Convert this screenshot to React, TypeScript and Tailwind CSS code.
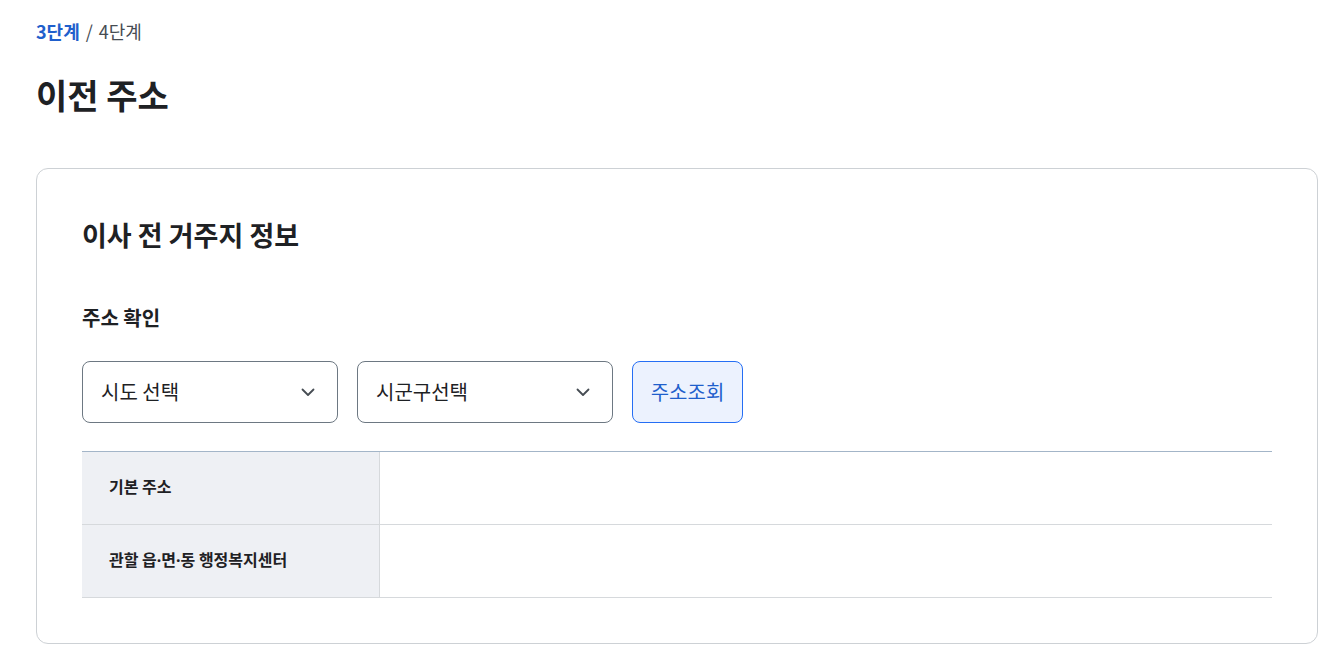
import React from "react";

const font = { fontFamily: '"Noto Sans CJK KR", "Noto Sans", sans-serif' };

function Chevron() {
  return (
    <svg width="18" height="18" viewBox="0 0 18 18" fill="none" stroke="#464c53" strokeWidth="1.8" strokeLinecap="round" strokeLinejoin="round">
      <path d="M3.5 6.5 L9 12 L14.5 6.5" />
    </svg>
  );
}

function Select({ label }: { label: string }) {
  return (
    <div className="flex h-[62px] w-[256px] items-center justify-between rounded-[8px] border border-[#6d7882] bg-white pl-[18px] pr-[20px]">
      <span className="text-[20px] text-[#1e2124]">{label}</span>
      <Chevron />
    </div>
  );
}

const dot = <span style={{ fontFamily: '"Noto Sans", sans-serif' }}>·</span>;

export default function App() {
  return (
    <div className="min-h-[658px] bg-white pl-[36px] pr-[24px] text-[#1e2124]" style={font}>
      <div className="pt-[18px] text-[18px] leading-[26px]">
        <span className="font-bold text-[#1f5fcc]">3단계</span>
        <span className="mx-[6px] text-[#464c53]">/</span>
        <span className="text-[#464c53]">4단계</span>
      </div>
      <h1 className="mt-[29px] text-[34px] font-bold leading-[44px]">이전 주소</h1>
      <div className="mt-[51px] rounded-[12px] border border-[#cdd1d5] px-[45px] pb-[45px] pt-[47px]">
        <h2 className="text-[27px] font-bold leading-[38px]">이사 전 거주지 정보</h2>
        <h3 className="mt-[50px] text-[20px] font-bold leading-[28px]">주소 확인</h3>
        <div className="mt-[29px] flex gap-[19px]">
          <Select label="시도 선택" />
          <Select label="시군구선택" />
          <button className="h-[62px] w-[111px] rounded-[8px] border border-[#256ef4] bg-[#ecf2fe] text-[20px] text-[#1f5fcc]">
            주소조회
          </button>
        </div>
        <div className="mt-[28px] border-t border-[#a3b5c8]">
          <div className="flex h-[73px] border-b border-[#d6d9dc]">
            <div className="flex w-[298px] items-center border-r border-[#d6d9dc] bg-[#eef0f4] pb-[4px] pl-[27px] text-[16px] font-bold">
              기본 주소
            </div>
            <div className="flex-1" />
          </div>
          <div className="flex h-[73px] border-b border-[#d6d9dc]">
            <div className="flex w-[298px] items-center border-r border-[#d6d9dc] bg-[#eef0f4] pb-[4px] pl-[27px] text-[16px] font-bold">
              <span>관할 읍{dot}면{dot}동 행정복지센터</span>
            </div>
            <div className="flex-1" />
          </div>
        </div>
      </div>
    </div>
  );
}
